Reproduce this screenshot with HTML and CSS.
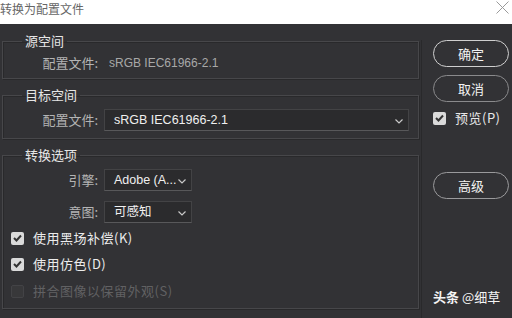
FILE: index.html
```html
<!DOCTYPE html>
<html lang="zh">
<head>
<meta charset="utf-8">
<link rel="stylesheet" href="styles.css">
</head>
<body>
<div class="titlebar">
  <span class="title">转换为配置文件</span>
  <svg class="close" width="13" height="13" viewBox="0 0 13 13"><path d="M0.5 0.5 L12.5 12.5 M12.5 0.5 L0.5 12.5" stroke="#9a9a9a" stroke-width="1" fill="none"/></svg>
</div>
<div class="main">
  <div class="left">
    <fieldset class="group g1">
      <legend>源空间</legend>
      <div class="row">
        <span class="lbl">配置文件:</span>
        <span class="static">sRGB IEC61966-2.1</span>
      </div>
    </fieldset>
    <fieldset class="group g2">
      <legend>目标空间</legend>
      <div class="row">
        <span class="lbl">配置文件:</span>
        <div class="select wide"><span>sRGB IEC61966-2.1</span><svg class="chev" width="8" height="5" viewBox="0 0 8 5"><path d="M0.5 0.5 L4 4 L7.5 0.5" stroke="#c8c8c8" stroke-width="1.2" fill="none"/></svg></div>
      </div>
    </fieldset>
    <fieldset class="group g3">
      <legend>转换选项</legend>
      <div class="row r-engine">
        <span class="lbl">引擎:</span>
        <div class="select narrow"><span>Adobe (A...</span><svg class="chev" width="8" height="5" viewBox="0 0 8 5"><path d="M0.5 0.5 L4 4 L7.5 0.5" stroke="#c8c8c8" stroke-width="1.2" fill="none"/></svg></div>
      </div>
      <div class="row r-intent">
        <span class="lbl">意图:</span>
        <div class="select narrow"><span>可感知</span><svg class="chev" width="8" height="5" viewBox="0 0 8 5"><path d="M0.5 0.5 L4 4 L7.5 0.5" stroke="#c8c8c8" stroke-width="1.2" fill="none"/></svg></div>
      </div>
      <div class="check c1"><span class="box on"><svg width="9" height="8" viewBox="0 0 9 8"><path d="M1 4 L3.5 6.5 L8 1.5" stroke="#333" stroke-width="2" fill="none"/></svg></span><span class="ctext">使用黑场补偿(K)</span></div>
      <div class="check c2"><span class="box on"><svg width="9" height="8" viewBox="0 0 9 8"><path d="M1 4 L3.5 6.5 L8 1.5" stroke="#333" stroke-width="2" fill="none"/></svg></span><span class="ctext">使用仿色(D)</span></div>
      <div class="check c3 disabled"><span class="box off"></span><span class="ctext">拼合图像以保留外观(S)</span></div>
    </fieldset>
  </div>
  <div class="sep"></div>
  <div class="right">
    <div class="btn primary">确定</div>
    <div class="btn">取消</div>
    <div class="check preview"><span class="box on"><svg width="9" height="8" viewBox="0 0 9 8"><path d="M1 4 L3.5 6.5 L8 1.5" stroke="#333" stroke-width="2" fill="none"/></svg></span><span class="ctext">预览(P)</span></div>
    <div class="btn adv">高级</div>
  </div>
</div>
<div class="watermark"><b>头条</b> @细草</div>
</body>
</html>
```
FILE: styles.css
```css
html, body {
  margin: 0;
  padding: 0;
}
body {
  width: 512px;
  height: 318px;
  overflow: hidden;
  background: #323235;
  font-family: "Noto Sans CJK SC", "Liberation Sans", sans-serif;
  font-size: 13px;
  color: #d8d8d8;
  position: relative;
}
.titlebar {
  height: 24px;
  background: #ffffff;
  display: flex;
  align-items: center;
  justify-content: space-between;
  padding: 0 3px 0 0;
  box-sizing: border-box;
}
.title {
  font-size: 12px;
  color: #666;
  line-height: 14px;
  margin-top: -6px;
}
.close {
  margin-top: -10px;
}
.main {
  display: flex;
  height: 294px;
}
.left {
  width: 417px;
  margin-left: 2px;
}
.sep {
  width: 1px;
  background: #29292b;
  margin-left: 2px;
  margin-top: 16px;
}
.group {
  margin: 0;
  padding: 0;
  border: 1px solid #47474a;
  box-shadow: 1px 1px 0 #29292b, inset 1px 1px 0 #29292b;
  min-width: 0;
}
.group legend {
  margin-left: 19px;
  padding: 0 3px;
  font-size: 13px;
  line-height: 14px;
  color: #e6e6e6;
}
.g1 {
  margin-top: 10px;
  height: 45px;
  box-sizing: border-box;
}
.g2 {
  margin-top: 9px;
  height: 51px;
  box-sizing: border-box;
}
.g3 {
  margin-top: 9px;
  height: 161px;
  box-sizing: border-box;
}
.row {
  display: flex;
  align-items: center;
  height: 22px;
}
.g1 .row {
  margin-top: 4px;
}
.g2 .row {
  margin-top: 7px;
}
.r-engine {
  margin-top: 7px;
}
.r-intent {
  margin-top: 10px;
}
.lbl {
  width: 95px;
  text-align: right;
  color: #b4b4b4;
  line-height: 14px;
  flex: none;
}
.static {
  margin-left: 11px;
  font-family: "Liberation Sans", "Noto Sans CJK SC", sans-serif;
  font-size: 12px;
  color: #a8a8a8;
}
.select {
  margin-left: 6px;
  height: 22px;
  box-sizing: border-box;
  background: #2b2b2d;
  border: 1px solid #434345;
  border-bottom-color: #58585a;
  display: flex;
  align-items: center;
  justify-content: space-between;
  padding: 0 5px 0 9px;
  color: #f0f0f0;
  font-family: "Liberation Sans", "Noto Sans CJK SC", sans-serif;
  font-size: 12.5px;
}
.select span {
  line-height: 14px;
}
.wide {
  width: 305px;
}
.narrow {
  width: 88px;
}
.chev {
  flex: none;
  margin-top: 2px;
}
.check {
  display: flex;
  align-items: center;
  height: 20px;
  margin-left: 8px;
}
.c1 {
  margin-top: 5px;
}
.c2 {
  margin-top: 6px;
}
.c3 {
  margin-top: 7px;
}
.box {
  width: 13px;
  height: 13px;
  box-sizing: border-box;
  border-radius: 2px;
  display: flex;
  align-items: center;
  justify-content: center;
  flex: none;
}
.box.on {
  background: #dadada;
}
.box.off {
  background: #38383a;
  border: 1px solid #434346;
}
.ctext {
  margin-left: 9px;
  color: #ececec;
  line-height: 14px;
  letter-spacing: 0.5px;
}
.disabled .ctext {
  color: #616163;
}
.right {
  margin-left: 11px;
  width: 76px;
  padding-top: 16px;
}
.btn {
  height: 27px;
  box-sizing: border-box;
  border: 1px solid #8a8a8c;
  border-radius: 14px;
  display: flex;
  align-items: center;
  justify-content: center;
  color: #f2f2f2;
  line-height: 14px;
  margin-bottom: 8px;
}
.btn.primary {
  border-color: #cfcfcf;
}
.preview {
  margin-left: 0;
  margin-top: -2px;
  height: 20px;
}
.preview .ctext {
  color: #e8e8e8;
}
.adv {
  margin-top: 44px;
  border-color: #9a9a9c;
}
.watermark {
  position: absolute;
  left: 433px;
  top: 289px;
  font-size: 13px;
  color: #f4f4f4;
  line-height: 15px;
}
.watermark b {
  font-weight: bold;
}
```
